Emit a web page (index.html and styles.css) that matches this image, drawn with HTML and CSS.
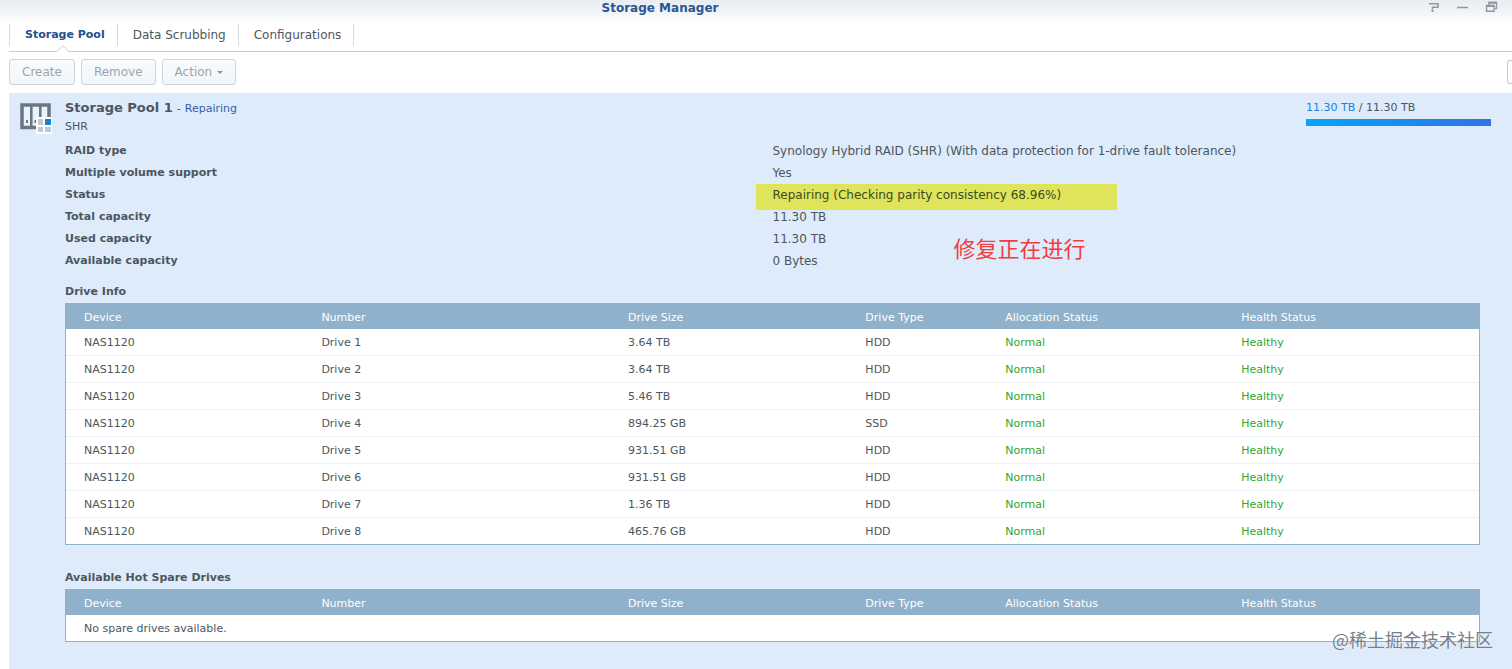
FILE: index.html
```html
<!DOCTYPE html>
<html lang="en">
<head>
<meta charset="utf-8">
<title>Storage Manager</title>
<link rel="stylesheet" href="styles.css">
</head>
<body>
<div class="window">
  <header class="titlebar">
    <h1 class="window-title">Storage Manager</h1>
    <div class="window-controls">
      <button class="control" aria-label="Help"><svg width="14" height="12" viewBox="0 0 14 12"><path d="M2 3.700H11V7.300H5.500V9.500" fill="none" stroke="#8f989f" stroke-width="1.600"/><path d="M4.500 10h2v2h-2z" fill="#8f989f"/></svg></button>
      <button class="control" aria-label="Minimize"><svg width="14" height="12" viewBox="0 0 14 12"><path d="M1 7.500H12" stroke="#8f989f" stroke-width="1.500"/></svg></button>
      <button class="control" aria-label="Restore"><svg width="14" height="12" viewBox="0 0 14 12"><path d="M4 5V2.500H11.500V8.500H10M1.500 5.500H9V11.300H1.500Z" fill="none" stroke="#8f989f" stroke-width="1.400"/><path d="M3.500 2.700H12M1 6H9.500" stroke="#8f989f" stroke-width="2"/></svg></button>
    </div>
  </header>

  <nav class="tabs">
    <a class="tab tab-active" href="#pool">Storage Pool<svg class="tab-notch" width="12" height="7" viewBox="0 0 12 7"><path d="M0 7L0 6.500L6 .7L12 6.500V7" fill="#fff"/><path d="M0 6.500L6 .7L12 6.500" fill="none" stroke="#c9cdd0"/></svg></a>
    <a class="tab" href="#scrubbing">Data Scrubbing</a>
    <a class="tab" href="#config">Configurations</a>
  </nav>

  <div class="toolbar">
    <button class="button" disabled>Create</button>
    <button class="button" disabled>Remove</button>
    <button class="button" disabled>Action<span class="caret"></span></button>
    <input class="search" type="text" aria-label="Filter">
  </div>

  <main class="pool" id="pool">
    <section class="pool-head">
      <svg class="pool-icon" width="34" height="32" viewBox="0 0 34 32">
        <rect x="2" y="3" width="27" height="22.500" fill="#eaf2fa" stroke="#697782" stroke-width="3.500"/>
        <path d="M11.300 3V26M20.300 3V26" stroke="#697782" stroke-width="2.600"/>
        <path d="M6 18h2v3h-2zM14.500 18h2v3h-2z" fill="#697782"/>
        <rect x="16" y="15" width="16" height="17" fill="#fff"/>
        <path d="M18 17h5v6h-5zM18 25h5v5h-5zM25 25h6v5h-6z" fill="#c4c9cf"/>
        <rect x="25" y="17" width="6" height="6" fill="#0f83d4"/>
      </svg>
      <div class="pool-name">
        <div class="name-line"><h2 class="pool-title">Storage Pool 1</h2><span class="dash">-</span><span class="pool-state">Repairing</span></div>
        <div class="pool-type">SHR</div>
      </div>
      <div class="usage">
        <div class="usage-text"><span class="used">11.30 TB</span> / 11.30 TB</div>
        <div class="usage-bar"></div>
      </div>
    </section>

    <section class="details">
      <dl class="properties">
        <dt>RAID type</dt><dd>Synology Hybrid RAID (SHR) (With data protection for 1-drive fault tolerance)</dd>
        <dt>Multiple volume support</dt><dd>Yes</dd>
        <dt>Status</dt><dd class="status"><mark class="marker"></mark><span class="status-text">Repairing (Checking parity consistency 68.96%)</span></dd>
        <dt>Total capacity</dt><dd>11.30 TB</dd>
        <dt>Used capacity</dt><dd class="noted">11.30 TB<span class="note" lang="zh-CN">修复正在进行</span></dd>
        <dt>Available capacity</dt><dd>0 Bytes</dd>
      </dl>

      <h3 class="table-title">Drive Info</h3>
      <table class="drives">
        <colgroup><col class="c-device"><col class="c-number"><col class="c-size"><col class="c-type"><col class="c-alloc"><col></colgroup>
        <thead><tr><th>Device</th><th>Number</th><th>Drive Size</th><th>Drive Type</th><th>Allocation Status</th><th>Health Status</th></tr></thead>
        <tbody>
          <tr><td>NAS1120</td><td>Drive 1</td><td>3.64 TB</td><td>HDD</td><td class="ok">Normal</td><td class="ok">Healthy</td></tr>
          <tr><td>NAS1120</td><td>Drive 2</td><td>3.64 TB</td><td>HDD</td><td class="ok">Normal</td><td class="ok">Healthy</td></tr>
          <tr><td>NAS1120</td><td>Drive 3</td><td>5.46 TB</td><td>HDD</td><td class="ok">Normal</td><td class="ok">Healthy</td></tr>
          <tr><td>NAS1120</td><td>Drive 4</td><td>894.25 GB</td><td>SSD</td><td class="ok">Normal</td><td class="ok">Healthy</td></tr>
          <tr><td>NAS1120</td><td>Drive 5</td><td>931.51 GB</td><td>HDD</td><td class="ok">Normal</td><td class="ok">Healthy</td></tr>
          <tr><td>NAS1120</td><td>Drive 6</td><td>931.51 GB</td><td>HDD</td><td class="ok">Normal</td><td class="ok">Healthy</td></tr>
          <tr><td>NAS1120</td><td>Drive 7</td><td>1.36 TB</td><td>HDD</td><td class="ok">Normal</td><td class="ok">Healthy</td></tr>
          <tr><td>NAS1120</td><td>Drive 8</td><td>465.76 GB</td><td>HDD</td><td class="ok">Normal</td><td class="ok">Healthy</td></tr>
        </tbody>
      </table>

      <h3 class="table-title spare-title">Available Hot Spare Drives</h3>
      <table class="drives">
        <colgroup><col class="c-device"><col class="c-number"><col class="c-size"><col class="c-type"><col class="c-alloc"><col></colgroup>
        <thead><tr><th>Device</th><th>Number</th><th>Drive Size</th><th>Drive Type</th><th>Allocation Status</th><th>Health Status</th></tr></thead>
        <tbody><tr><td colspan="6">No spare drives available.</td></tr></tbody>
      </table>
    </section>
    <div class="watermark" lang="zh-CN">@稀土掘金技术社区</div>
  </main>
</div>
</body>
</html>
```

FILE: styles.css
```css
* {
  box-sizing: border-box;
}

body {
  margin: 0;
  background: #fff;
  color: #4d565f;
  font: 12px/22px Verdana, "DejaVu Sans", sans-serif;
}

h1, h2, h3, dl, dd {
  margin: 0;
}

.window {
  display: flex;
  flex-direction: column;
  min-height: 100vh;
  background: linear-gradient(#e8edf2, #eff3f7 10px, #fff 24px);
}

.titlebar {
  position: relative;
  height: 18px;
  padding-right: 192px;
}

.window-title {
  color: #2a5592;
  font-size: 12px;
  line-height: 16px;
  text-align: center;
}

.window-controls {
  position: absolute;
  top: 0;
  right: 13px;
  display: flex;
  gap: 15px;
}

.control {
  width: 14px;
  height: 12px;
  padding: 0;
  border: 0;
  background: none;
}

.control svg {
  display: block;
}

.tabs {
  display: flex;
  align-items: flex-start;
  height: 34px;
  margin-left: 9px;
  padding-top: 6px;
  border-bottom: 1px solid #c9cdd0;
}

.tab {
  position: relative;
  height: 22px;
  padding: 0 12px 0 15px;
  border-right: 1px solid #d5dade;
  color: #4d565f;
  line-height: 22px;
  text-decoration: none;
}

.tab-active {
  border-left: 1px solid #d5dade;
  color: #22508f;
  font-size: 11px;
  font-weight: bold;
}

.tab-notch {
  position: absolute;
  bottom: -6px;
  left: calc(50% - 6px);
}

.toolbar {
  display: flex;
  gap: 6px;
  padding: 7px 0 8px 9px;
  overflow: hidden;
}

.button {
  height: 26px;
  padding: 0 12px;
  border: 1px solid #cbd4dc;
  border-radius: 3px;
  background: linear-gradient(#f9fbfd, #f1f6fa);
  color: #9ba5ad;
  font: inherit;
  white-space: nowrap;
}

.caret {
  display: inline-block;
  margin-left: 5px;
  border: 3px solid transparent;
  border-top-color: #8b969f;
  border-bottom: 0;
  vertical-align: middle;
}

.search {
  flex: none;
  width: 5px;
  height: 24px;
  margin: 1px 0 0 auto;
  padding: 0;
  border: 1px solid #c2ccd4;
  border-right: 0;
  border-radius: 3px 0 0 3px;
}

.pool {
  position: relative;
  flex: 1;
  margin-left: 9px;
  padding: 5px 0 0 11px;
  background: #deebfb;
}

.pool-head {
  display: flex;
  align-items: flex-start;
  padding-right: 21px;
}

.pool-icon {
  flex: none;
  margin-top: 4px;
}

.pool-name {
  flex: 1;
  margin-left: 11px;
}

.name-line {
  display: flex;
  align-items: baseline;
  gap: 4px;
  line-height: 20px;
}

.pool-title {
  font-size: 13px;
}

.dash,
.pool-state,
.pool-type,
.usage-text {
  font-size: 11px;
}

.pool-state {
  color: #3560a8;
}

.pool-type {
  line-height: 16px;
}

.usage {
  width: 185px;
}

.usage-text {
  line-height: 20px;
}

.used {
  color: #1d82dc;
}

.usage-bar {
  height: 7px;
  margin-top: 1px;
  background: linear-gradient(90deg, #05a5fb, #2f73e4);
}

.details {
  padding: 5px 32px 0 45px;
}

.properties {
  display: grid;
  grid-template-columns: 1fr 1fr;
}

.properties dt {
  font-size: 11px;
  font-weight: bold;
}

.status,
.noted {
  position: relative;
}

.marker {
  position: absolute;
  top: 0;
  left: -17px;
  width: 361px;
  height: 26px;
  background: #dfe45b;
}

.status-text {
  position: relative;
  color: #3a4b26;
}

.note {
  position: absolute;
  top: 3px;
  left: 181px;
  color: #f23c41;
  font: 22px/32px "Noto Sans CJK SC", sans-serif;
}

.table-title {
  margin-top: 9px;
  font-size: 11px;
  line-height: 22px;
}

.spare-title {
  margin-top: 22px;
}

.drives {
  width: 100%;
  table-layout: fixed;
  border: 1px solid #8fb1cb;
  border-spacing: 0;
  background: #fff;
  font-size: 11px;
}

.drives th,
.drives td {
  padding: 2px 0 0 18px;
  line-height: 20px;
  text-align: left;
}

.drives th {
  height: 25px;
  background: #8fb1cb;
  color: #fff;
  font-weight: normal;
}

.drives td {
  height: 27px;
  border-bottom: 1px solid #edf1f4;
}

.drives tr:last-child td {
  height: 26px;
  border-bottom: 0;
}

.drives .ok {
  color: #35a52b;
}

.c-device,
.c-size {
  width: 16.8%;
}

.c-alloc {
  width: 16.7%;
}

.c-number {
  width: 21.7%;
}

.c-type {
  width: 9.9%;
}

.watermark {
  position: absolute;
  right: 19px;
  bottom: 17px;
  color: #75808b;
  font: 18px/26px "Noto Sans CJK SC", sans-serif;
  text-shadow: 0 0 1px #fff;
}
```
